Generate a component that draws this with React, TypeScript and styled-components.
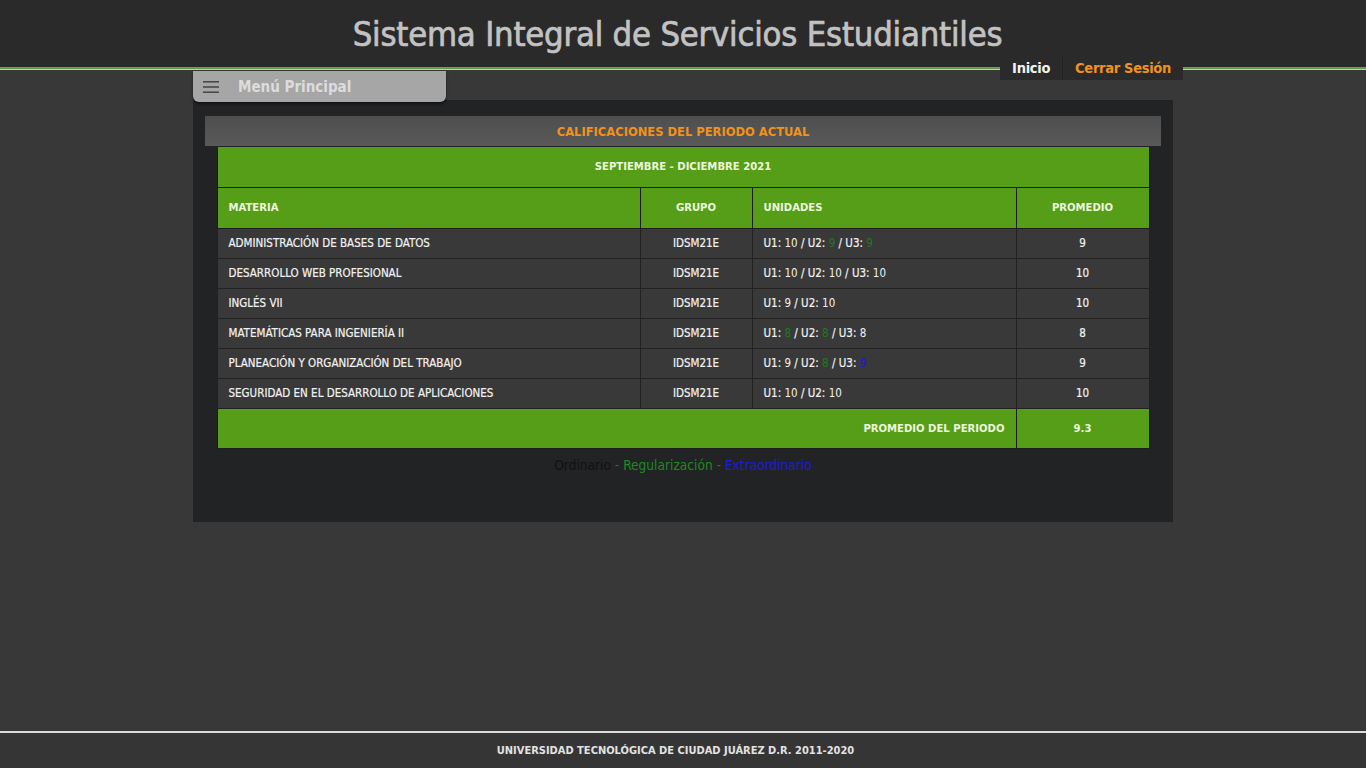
import React from "react";
import styled, { createGlobalStyle } from "styled-components";

const GlobalStyle = createGlobalStyle`
  html, body { margin: 0; padding: 0; background: #383838; }
  body { font-family: "DejaVu Sans Condensed", "Liberation Sans Narrow", "Liberation Sans", sans-serif; }
  #root { min-height: 100vh; display: flex; flex-direction: column; }
`;

const Header = styled.header`
  height: 67px;
  background: #2a2a2a;
  border-bottom: 2px solid #6c9d4c;
  box-shadow: 0 1px 0 #b9d2a6;
  display: flex;
  justify-content: center;
  align-items: center;
  position: relative;
`;

const Title = styled.h1`
  margin: 0;
  padding: 1px 11px 0 0;
  font-family: "DejaVu Sans Condensed", "Liberation Sans Narrow", sans-serif;
  font-size: 34.3px;
  font-weight: normal;
  color: #c2c2c2;
  -webkit-text-stroke: 0.7px #c2c2c2;
  letter-spacing: -0.2px;
`;

const Nav = styled.nav`
  position: absolute;
  right: 183px;
  top: 56px;
  display: flex;
  background: #2a2a2a;
  height: 24px;
`;

const NavLink = styled.a<{ $accent?: boolean }>`
  display: flex;
  align-items: center;
  padding: 0 12px;
  font-size: 14.5px;
  font-weight: bold;
  letter-spacing: -0.3px;
  color: ${(p) => (p.$accent ? "#f0921c" : "#f2f2f2")};
  text-decoration: none;
  border-left: ${(p) => (p.$accent ? "1px solid #222" : "none")};
`;

const Main = styled.main`
  flex: 1;
  display: flex;
  flex-direction: column;
  align-items: flex-start;
  padding-left: 193px;
`;

const MenuButton = styled.button`
  margin-top: 2px;
  width: 253px;
  height: 31px;
  background: #a6a6a6;
  border: none;
  border-radius: 0 0 6px 6px;
  box-shadow: 0 2px 3px rgba(0, 0, 0, 0.5);
  display: flex;
  align-items: center;
  gap: 19px;
  padding: 0 0 0 10px;
  font-family: inherit;
  font-size: 15px;
  font-weight: bold;
  color: #dcdcdc;
  position: relative;
  z-index: 2;
  cursor: pointer;
`;

const Panel = styled.section`
  margin-top: -2px;
  width: 980px;
  height: 422px;
  background: #222325;
  box-sizing: border-box;
  padding: 16px 12px 0;
  display: flex;
  flex-direction: column;
  align-items: center;
`;

const SectionTitle = styled.div`
  align-self: stretch;
  height: 30px;
  background: linear-gradient(to bottom, #4e4e4e, #595959);
  display: flex;
  align-items: center;
  justify-content: center;
  font-size: 12.8px;
  font-weight: bold;
  color: #f0921c;
  margin-bottom: 1px;
`;

const Table = styled.table`
  width: 933px;
  border-collapse: collapse;
  font-size: 11.5px;
`;

const GreenCell = styled.th<{ $align?: string; $h?: number }>`
  background: #569d18;
  color: #ecf8dc;
  font-size: 11.2px;
  font-weight: bold;
  height: ${(p) => p.$h ?? 40}px;
  padding: 0 11px;
  text-align: ${(p) => p.$align ?? "left"};
  border: 1px solid #1d1d1d;
  border-top: none;
  box-sizing: border-box;
`;

const Cell = styled.td<{ $align?: string }>`
  background: #393939;
  color: #f2f2f2;
  height: 30px;
  padding: 0 11px;
  text-align: ${(p) => p.$align ?? "left"};
  border: 1px solid #222;
  box-sizing: border-box;
  -webkit-text-stroke: 0.2px #f2f2f2;
`;

const Grade = styled.span<{ $kind?: "reg" | "ext" }>`
  color: ${(p) => (p.$kind === "reg" ? "#1d7a1d" : p.$kind === "ext" ? "#1a1ad8" : "inherit")};
  -webkit-text-stroke: 0;
`;

const Legend = styled.p`
  margin: 8px 0 0;
  font-size: 13.6px;
  color: #555;
`;

const LegendItem = styled.span<{ $c: string }>`
  color: ${(p) => p.$c};
`;

const Footer = styled.footer`
  height: 35px;
  border-top: 2px solid #dcdcdc;
  background: #353535;
  display: flex;
  align-items: center;
  justify-content: center;
  padding-right: 15px;
  font-size: 11px;
  font-weight: bold;
  color: #e2e2e2;
`;

const FooterSpacer = styled.div`
  height: 10px;
`;

type Unit = { v: number; k?: "reg" | "ext" };
const rows: { m: string; u: Unit[]; p: string }[] = [
  { m: "ADMINISTRACIÓN DE BASES DE DATOS", u: [{ v: 10 }, { v: 9, k: "reg" }, { v: 9, k: "reg" }], p: "9" },
  { m: "DESARROLLO WEB PROFESIONAL", u: [{ v: 10 }, { v: 10 }, { v: 10 }], p: "10" },
  { m: "INGLÉS VII", u: [{ v: 9 }, { v: 10 }], p: "10" },
  { m: "MATEMÁTICAS PARA INGENIERÍA II", u: [{ v: 8, k: "reg" }, { v: 8, k: "reg" }, { v: 8 }], p: "8" },
  { m: "PLANEACIÓN Y ORGANIZACIÓN DEL TRABAJO", u: [{ v: 9 }, { v: 8, k: "reg" }, { v: 9, k: "ext" }], p: "9" },
  { m: "SEGURIDAD EN EL DESARROLLO DE APLICACIONES", u: [{ v: 10 }, { v: 10 }], p: "10" },
];

const Hamburger = () => (
  <svg width="16" height="12" viewBox="0 0 16 12">
    <rect x="0" y="0" width="16" height="1.6" fill="#4a4a4a" />
    <rect x="0" y="5.2" width="16" height="1.6" fill="#4a4a4a" />
    <rect x="0" y="10.4" width="16" height="1.6" fill="#4a4a4a" />
  </svg>
);

export default function App() {
  return (
    <>
      <GlobalStyle />
      <Header>
        <Title>Sistema Integral de Servicios Estudiantiles</Title>
        <Nav>
          <NavLink href="#">Inicio</NavLink>
          <NavLink href="#" $accent>
            Cerrar Sesión
          </NavLink>
        </Nav>
      </Header>
      <Main>
        <MenuButton>
          <Hamburger />
          Menú Principal
        </MenuButton>
        <Panel>
          <SectionTitle>CALIFICACIONES DEL PERIODO ACTUAL</SectionTitle>
          <Table>
            <thead>
              <tr>
                <GreenCell colSpan={4} $align="center">
                  SEPTIEMBRE - DICIEMBRE 2021
                </GreenCell>
              </tr>
              <tr>
                <GreenCell style={{ width: 423 }} $h={41}>MATERIA</GreenCell>
                <GreenCell style={{ width: 112 }} $align="center" $h={41}>GRUPO</GreenCell>
                <GreenCell style={{ width: 264 }} $h={41}>UNIDADES</GreenCell>
                <GreenCell $align="center" $h={41}>PROMEDIO</GreenCell>
              </tr>
            </thead>
            <tbody>
              {rows.map((r) => (
                <tr key={r.m}>
                  <Cell>{r.m}</Cell>
                  <Cell $align="center">IDSM21E</Cell>
                  <Cell>
                    {r.u.map((u, i) => (
                      <React.Fragment key={i}>
                        {i > 0 && " / "}U{i + 1}: <Grade $kind={u.k}>{u.v}</Grade>
                      </React.Fragment>
                    ))}
                  </Cell>
                  <Cell $align="center">{r.p}</Cell>
                </tr>
              ))}
            </tbody>
            <tfoot>
              <tr>
                <GreenCell colSpan={3} $align="right">PROMEDIO DEL PERIODO</GreenCell>
                <GreenCell $align="center">9.3</GreenCell>
              </tr>
            </tfoot>
          </Table>
          <Legend>
            <LegendItem $c="#111">Ordinario</LegendItem> -{" "}
            <LegendItem $c="#1f8a1f">Regularización</LegendItem> -{" "}
            <LegendItem $c="#1c1cdc">Extraordinario</LegendItem>
          </Legend>
        </Panel>
        <FooterSpacer />
      </Main>
      <Footer>UNIVERSIDAD TECNOLÓGICA DE CIUDAD JUÁREZ D.R. 2011-2020</Footer>
    </>
  );
}
